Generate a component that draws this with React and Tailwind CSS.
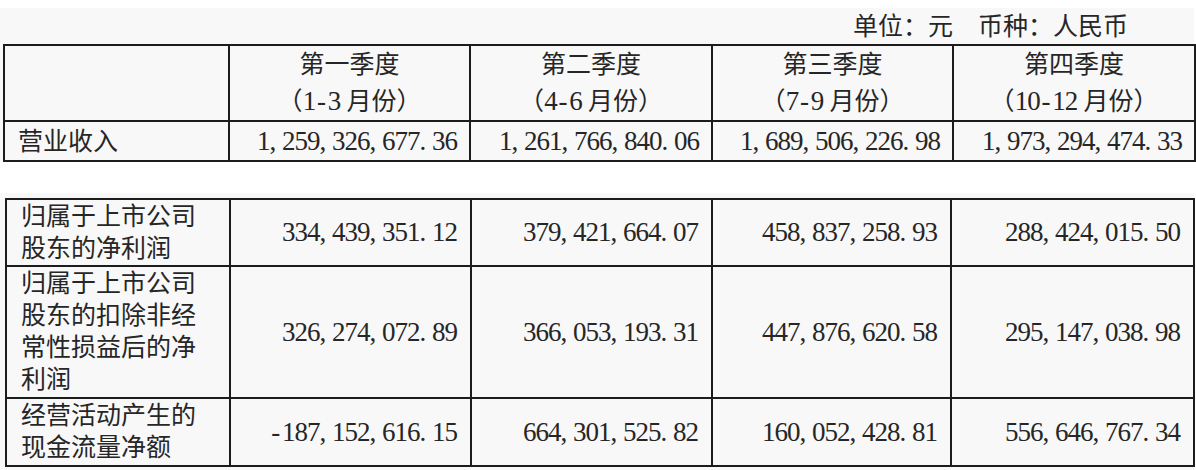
import React from 'react';

const font = { fontFamily: "'Liberation Serif', 'Noto Sans CJK SC', serif" };

// SimSun-style half-width digits: every glyph gets the same 12.5px cell
function Num({ value }) {
  return (
    <span className="whitespace-nowrap text-[27px]">
      {value.split('').map((c, i) => (
        <span
          key={i}
          className={`inline-block w-[12.5px] ${c === ',' || c === '.' ? 'text-left' : 'text-center'}`}
        >
          {c}
        </span>
      ))}
    </span>
  );
}

const quarters = [
  ['第一季度', '1-3'],
  ['第二季度', '4-6'],
  ['第三季度', '7-9'],
  ['第四季度', '10-12'],
];

const revenue = ['1,259,326,677.36', '1,261,766,840.06', '1,689,506,226.98', '1,973,294,474.33'];

const rows = [
  {
    label: '归属于上市公司股东的净利润',
    h: 'h-[67px]',
    values: ['334,439,351.12', '379,421,664.07', '458,837,258.93', '288,424,015.50'],
  },
  {
    label: '归属于上市公司股东的扣除非经常性损益后的净利润',
    h: 'h-[132px]',
    values: ['326,274,072.89', '366,053,193.31', '447,876,620.58', '295,147,038.98'],
  },
  {
    label: '经营活动产生的现金流量净额',
    h: 'h-[68px]',
    values: ['-187,152,616.15', '664,301,525.82', '160,052,428.81', '556,646,767.34'],
  },
];

const cell = 'border-2 border-[#1c1c1c]';

export default function App() {
  return (
    <div className="w-[1196px] h-[470px] bg-white text-[#262626] text-[25px] overflow-hidden" style={font}>
      <div className="h-[8px]" />
      <div className="bg-[#f8f8f8] h-[153px] w-[1194px]">
        <div className="h-[36px] flex items-center justify-end pr-[66px] leading-none">
          单位：元　币种：人民币
        </div>
        <table className="ml-[3px] w-[1191px] table-fixed border-collapse">
          <colgroup>
            <col className="w-[225px]" />
            <col className="w-[241px]" />
            <col className="w-[242px]" />
            <col className="w-[241px]" />
            <col className="w-[242px]" />
          </colgroup>
          <tbody>
            <tr className="h-[76px]">
              <td className={cell} />
              {quarters.map(([q, m]) => (
                <td key={q} className={`${cell} text-center align-middle leading-[36px] pt-[1px]`}>
                  <div>{q}</div>
                  <div>
                    （<Num value={m} /> 月份）
                  </div>
                </td>
              ))}
            </tr>
            <tr className="h-[40px]">
              <td className={`${cell} pl-[13px] leading-none`}>营业收入</td>
              {revenue.map((v) => (
                <td key={v} className={`${cell} text-right pr-[12px] leading-none`}>
                  <Num value={v} />
                </td>
              ))}
            </tr>
          </tbody>
        </table>
      </div>
      <div className="h-[32px]" />
      <div className="bg-[#f8f8f8] h-[277px] w-[1194px] pt-[5px]">
        <table className="ml-[5px] w-[1188px] table-fixed border-collapse">
          <colgroup>
            <col className="w-[224px]" />
            <col className="w-[241px]" />
            <col className="w-[241px]" />
            <col className="w-[239px]" />
            <col className="w-[243px]" />
          </colgroup>
          <tbody>
            {rows.map((r) => (
              <tr key={r.label} className={r.h}>
                <td className={`${cell} pl-[14px] pr-[26px] leading-[32px] align-middle`}>{r.label}</td>
                {r.values.map((v) => (
                  <td key={v} className={`${cell} text-right pr-[13px] align-middle leading-none`}>
                    <Num value={v} />
                  </td>
                ))}
              </tr>
            ))}
          </tbody>
        </table>
      </div>
    </div>
  );
}
